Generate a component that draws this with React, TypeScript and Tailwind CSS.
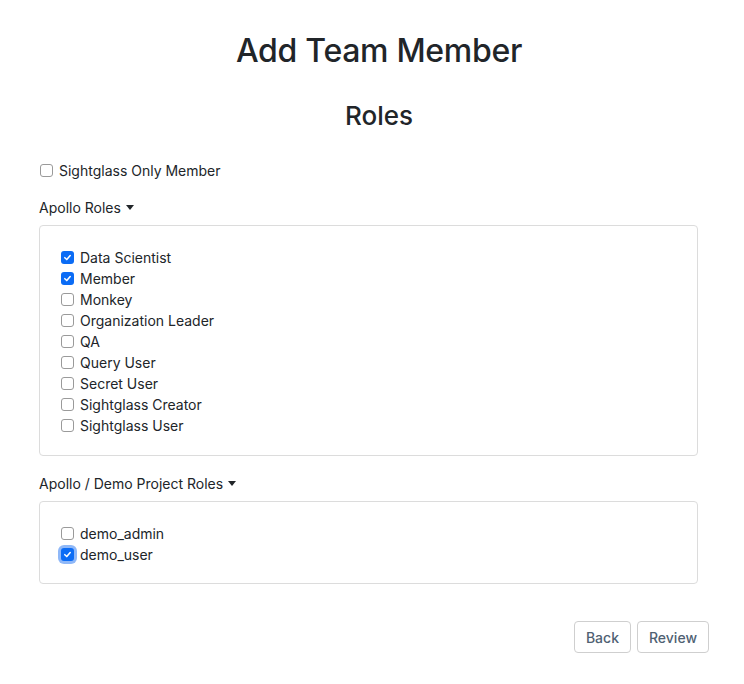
import React from 'react'

type Item = { label: string; checked?: boolean; focus?: boolean }

function Box({ checked, focus }: { checked?: boolean; focus?: boolean }) {
  if (checked) {
    return (
      <span className={`flex h-[13px] w-[13px] shrink-0 items-center justify-center rounded-[3px] bg-[#0b6cf5] ${focus ? 'ring-[3px] ring-[#8fb8f8]' : ''}`}>
        <svg width="9" height="9" viewBox="0 0 10 10" fill="none">
          <path d="M2 5.2 L4.2 7.3 L8 2.8" stroke="white" strokeWidth="1.7" strokeLinecap="round" strokeLinejoin="round" />
        </svg>
      </span>
    )
  }
  return <span className="h-[13px] w-[13px] shrink-0 rounded-[3px] border border-[#9a9a9a] bg-white" />
}

function Check({ label, checked, focus }: Item) {
  return (
    <div className="flex h-[21px] items-center gap-[6px]">
      <Box checked={checked} focus={focus} />
      <span>{label}</span>
    </div>
  )
}

function Caret() {
  return <span className="ml-[5px] inline-block h-0 w-0 border-x-[4px] border-t-[5px] border-x-transparent border-t-[#212529] align-middle" />
}

const apollo: Item[] = [
  { label: 'Data Scientist', checked: true },
  { label: 'Member', checked: true },
  { label: 'Monkey' },
  { label: 'Organization Leader' },
  { label: 'QA' },
  { label: 'Query User' },
  { label: 'Secret User' },
  { label: 'Sightglass Creator' },
  { label: 'Sightglass User' },
]

const demo: Item[] = [
  { label: 'demo_admin' },
  { label: 'demo_user', checked: true, focus: true },
]

export default function App() {
  return (
    <div className="min-h-[684px] bg-white text-[14px] text-[#212529]" style={{ fontFamily: 'Inter, "Noto Sans", sans-serif' }}>
      <h1 className="pl-[14px] pt-[30px] text-center text-[32px] font-medium leading-[42px] tracking-[-0.3px]">Add Team Member</h1>
      <h2 className="mt-[28px] pl-[14px] text-center text-[26px] font-medium leading-[32px]">Roles</h2>

      <div className="ml-[39px] mr-[46px] mt-[28px]">
        <div className="pl-px">
          <Check label="Sightglass Only Member" />
        </div>

        <div className="mt-[16px] flex h-[21px] items-center">Apollo Roles<Caret /></div>
        <div className="mt-[7px] rounded-[4px] border border-[#dcdcdc] px-[21px] pb-[19px] pt-[21px]">
          {apollo.map((r) => <Check key={r.label} {...r} />)}
        </div>

        <div className="mt-[17px] flex h-[21px] items-center">Apollo / Demo Project Roles<Caret /></div>
        <div className="mt-[7px] rounded-[4px] border border-[#dcdcdc] px-[21px] pb-[18px] pt-[21px]">
          {demo.map((r) => <Check key={r.label} {...r} />)}
        </div>
      </div>

      <div className="mr-[35px] mt-[37px] flex justify-end gap-[6px]">
        <button className="h-[32px] rounded-[4px] border border-[#cfcfcf] bg-white px-[11px] text-[14px] font-medium text-[#4f6173]">Back</button>
        <button className="h-[32px] rounded-[4px] border border-[#cfcfcf] bg-white px-[11px] text-[14px] font-medium text-[#4f6173]">Review</button>
      </div>
    </div>
  )
}
